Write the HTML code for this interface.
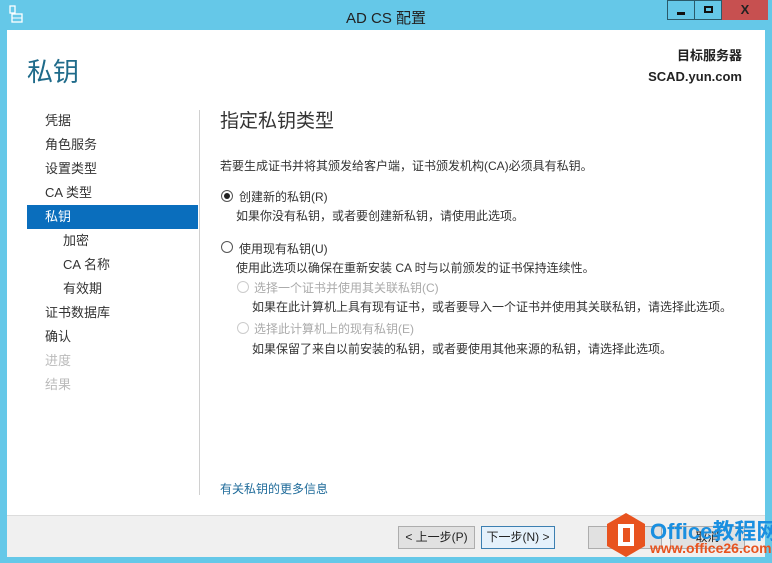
<!DOCTYPE html>
<html><head><meta charset="utf-8"><style>
*{margin:0;padding:0;box-sizing:border-box}
body{width:772px;height:563px;background:#65c8e8;position:relative;overflow:hidden;font-family:"Liberation Sans","Noto Sans CJK SC",sans-serif;color:#333}
.abs{position:absolute;white-space:nowrap}
.main{position:absolute;left:7px;top:30px;width:758px;height:485px;background:#fff}
.foot{position:absolute;left:7px;top:515px;width:758px;height:42px;background:#f0f0f0;border-top:1px solid #dcdcdc}
.nav{font-size:13px;color:#333}
.btn{position:absolute;top:526px;height:23px;border:1px solid #adadad;background:#e1e1e1;font-size:12px;text-align:center;line-height:21px;color:#222}
.radio{position:absolute;width:12px;height:12px;border:1px solid #555;border-radius:50%;background:#fff}
.t12{font-size:12px}
</style></head><body>
<svg class="abs" style="left:9px;top:5px" width="14" height="18" viewBox="0 0 14 18"><rect x="1" y="1" width="5" height="7" fill="none" stroke="#fff" stroke-width="1.3"/><rect x="3" y="9" width="10" height="8" fill="none" stroke="#fff" stroke-width="1.3"/><line x1="3" y1="13" x2="13" y2="13" stroke="#fff"/></svg>
<div class="abs" style="left:0;width:772px;top:7px;text-align:center;font-size:15px;color:#222">AD CS 配置</div>
<div class="abs" style="left:667px;top:0;width:28px;height:20px;border:1px solid #2a5a6a"><div style="position:absolute;left:9px;top:11px;width:8px;height:3px;background:#111"></div></div>
<div class="abs" style="left:694px;top:0;width:28px;height:20px;border:1px solid #2a5a6a"><div style="position:absolute;left:9px;top:5px;width:9px;height:7px;border:2px solid #111"></div></div>
<div class="abs" style="left:722px;top:0;width:46px;height:20px;background:#c75050;color:#222;font-size:13px;font-weight:bold;text-align:center;line-height:20px">X</div>
<div class="main"></div>
<div class="abs" style="left:27px;top:52px;font-size:26px;color:#1f6b8a">私钥</div>
<div class="abs" style="right:30px;top:45px;font-size:13px;font-weight:bold;color:#222;text-align:right;line-height:21px">目标服务器<br>SCAD.yun.com</div>
<div class="abs" style="left:27px;top:205px;width:171px;height:24px;background:#0a6ebd"></div>
<div class="abs nav" style="left:45px;top:109px;line-height:24px">凭据<br>角色服务<br>设置类型<br>CA 类型<br><span style="color:#fff">私钥</span><br><span style="padding-left:18px">加密</span><br><span style="padding-left:18px">CA 名称</span><br><span style="padding-left:18px">有效期</span><br>证书数据库<br>确认<br><span style="color:#bbb">进度</span><br><span style="color:#bbb">结果</span></div>
<div class="abs" style="left:199px;top:110px;width:1px;height:385px;background:#d0d0d0"></div>
<div class="abs" style="left:220px;top:106px;font-size:19px;color:#333">指定私钥类型</div>
<div class="abs t12" style="left:220px;top:157px">若要生成证书并将其颁发给客户端，证书颁发机构(CA)必须具有私钥。</div>
<div class="radio" style="left:221px;top:190px"><div style="position:absolute;left:2px;top:2px;width:6px;height:6px;border-radius:50%;background:#222"></div></div>
<div class="abs t12" style="left:239px;top:188px">创建新的私钥(R)</div>
<div class="abs t12" style="left:236px;top:207px">如果你没有私钥，或者要创建新私钥，请使用此选项。</div>
<div class="radio" style="left:221px;top:241px"></div>
<div class="abs t12" style="left:239px;top:240px">使用现有私钥(U)</div>
<div class="abs t12" style="left:236px;top:259px">使用此选项以确保在重新安装 CA 时与以前颁发的证书保持连续性。</div>
<div class="radio" style="left:237px;top:281px;border-color:#ccc"></div>
<div class="abs t12" style="left:254px;top:279px;color:#aaa">选择一个证书并使用其关联私钥(C)</div>
<div class="abs t12" style="left:252px;top:298px">如果在此计算机上具有现有证书，或者要导入一个证书并使用其关联私钥，请选择此选项。</div>
<div class="radio" style="left:237px;top:322px;border-color:#ccc"></div>
<div class="abs t12" style="left:254px;top:320px;color:#aaa">选择此计算机上的现有私钥(E)</div>
<div class="abs t12" style="left:252px;top:340px">如果保留了来自以前安装的私钥，或者要使用其他来源的私钥，请选择此选项。</div>
<div class="abs t12" style="left:220px;top:480px;color:#1f6b9a">有关私钥的更多信息</div>
<div class="foot"></div>
<div class="btn" style="left:398px;width:77px">&lt; 上一步(P)</div>
<div class="btn" style="left:481px;width:74px;border-color:#3c7fb1;background:#e5f1fb">下一步(N) &gt;</div>
<div class="btn" style="left:588px;width:74px">创建</div>
<div class="btn" style="left:670px;width:75px">取消</div>
<svg class="abs" style="left:606px;top:512px" width="40" height="46" viewBox="0 0 40 46"><polygon points="20,1 39,12 39,34 20,45 1,34 1,12" fill="#e8531f"/><rect x="12" y="12" width="16" height="22" fill="#fff"/><rect x="17" y="16" width="7" height="14" fill="#e8531f"/></svg>
<div class="abs" style="left:650px;top:514px;font-size:22px;font-weight:bold;color:#1a8fe0">Office教程网</div>
<div class="abs" style="left:650px;top:540px;font-size:14px;font-weight:bold;color:#e8531f">www.office26.com</div>
</body></html>
